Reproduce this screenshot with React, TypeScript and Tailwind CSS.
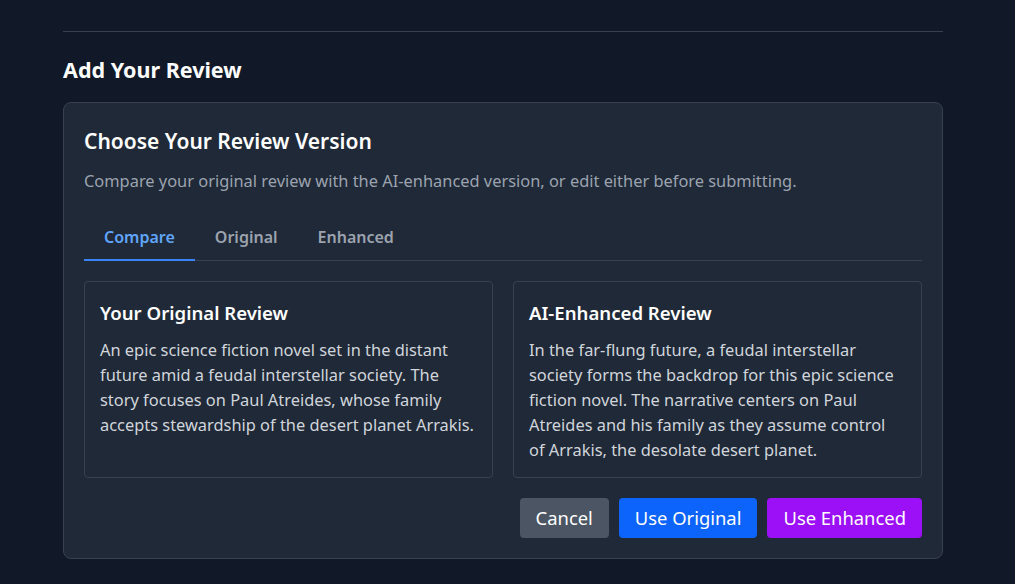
import React, { useState } from 'react';

const originalText =
  'An epic science fiction novel set in the distant future amid a feudal interstellar society. The story focuses on Paul Atreides, whose family accepts stewardship of the desert planet Arrakis.';
const enhancedText =
  'In the far-flung future, a feudal interstellar society forms the backdrop for this epic science fiction novel. The narrative centers on Paul Atreides and his family as they assume control of Arrakis, the desolate desert planet.';

const tabs = ['Compare', 'Original', 'Enhanced'];

const App: React.FC = () => {
  const [tab, setTab] = useState('Compare');

  return (
    <div
      className="min-h-screen bg-[#111827] text-white pt-[31px]"
      style={{ fontFamily: '"Noto Sans", "Open Sans", sans-serif' }}
    >
      <div className="ml-[63px] w-[880px]">
        <div className="border-t border-[#374151]" />
        <h2 className="mt-6 text-[21.5px] font-bold leading-7">Add Your Review</h2>

        {/* review chooser card */}
        <div className="mt-[18px] rounded-lg border border-[#374151] bg-[#1f2937] px-5 pt-6 pb-5">
          <h3 className="text-[21px] font-semibold leading-7">Choose Your Review Version</h3>
          <p className="mt-3.5 text-[16.4px] leading-6 text-[#9ca3af]">
            Compare your original review with the AI-enhanced version, or edit either before submitting.
          </p>

          <div className="mt-5 flex border-b border-[#374151]">
            {tabs.map(t => (
              <button
                key={t}
                onClick={() => setTab(t)}
                className={
                  t === tab
                    ? 'px-5 pt-3 pb-2.5 -mb-px border-b-2 border-[#3b82f6] font-semibold text-[#60a5fa] leading-6'
                    : 'px-5 pt-3 pb-2.5 -mb-px border-b-2 border-transparent font-semibold text-[#9ca3af] leading-6'
                }
              >
                {t}
              </button>
            ))}
          </div>

          <div className="mt-5 grid grid-cols-2 gap-5">
            <div className="rounded border border-[#374151] pl-[15px] pr-[17px] pt-[17px] pb-[15px]">
              <h4 className="text-[18.6px] font-semibold leading-7">Your Original Review</h4>
              <p className="mt-2.5 text-[16.4px] leading-[25px] text-[#d1d5db]">{originalText}</p>
            </div>
            <div className="rounded border border-[#374151] pl-[15px] pr-[17px] pt-[17px] pb-[15px]">
              <h4 className="text-[18.6px] font-semibold leading-7">AI-Enhanced Review</h4>
              <p className="mt-2.5 text-[16.4px] leading-[25px] text-[#d1d5db]">{enhancedText}</p>
            </div>
          </div>

          <div className="mt-5 flex justify-end gap-2.5">
            <button className="h-10 rounded bg-[#4b5563] px-4 text-[18.4px] text-white">Cancel</button>
            <button className="h-10 rounded bg-[#0d64fd] px-4 text-[18.4px] text-white">Use Original</button>
            <button className="h-10 rounded bg-[#9b10f6] px-4 text-[18.4px] text-white">Use Enhanced</button>
          </div>
        </div>
      </div>
    </div>
  );
};

export default App;
